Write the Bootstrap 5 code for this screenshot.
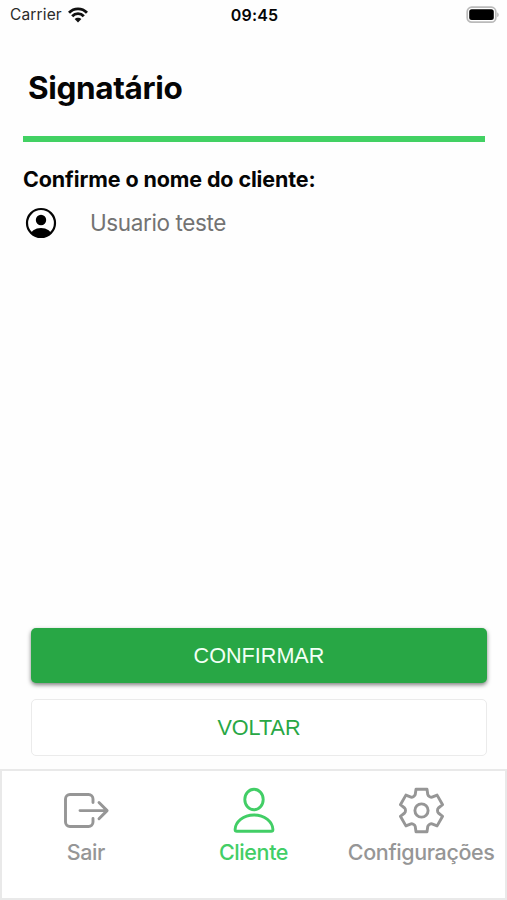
<!DOCTYPE html>
<html lang="pt-BR">
<head>
<meta charset="utf-8">
<meta name="viewport" content="width=device-width, initial-scale=1">
<title>Signatário</title>
<link href="https://cdn.jsdelivr.net/npm/bootstrap@5.3.0/dist/css/bootstrap.min.css" rel="stylesheet">
<style>
body{font-family:Inter,"Liberation Sans",sans-serif;color:#050505;background:#fefefe}
svg{display:block;flex:none}
.screen{height:900px;overflow:hidden}
.statusbar{height:30px;padding:0 8px 0 10px;line-height:30px}
.carrier{font-size:15.5px;color:#2b2b2b;letter-spacing:.15px}
.wifi{margin-left:6px}
.clock{font-size:16px;font-weight:600;letter-spacing:.2px}
.page-title{font-size:31.5px;font-weight:700;line-height:40px;margin:38px 0 0 28px;letter-spacing:-.35px}
.rule{height:6px;background:#42d163;margin:28px 22px 0 23px}
.question{font-size:21.5px;font-weight:700;line-height:28px;margin:23px 0 0 23px;letter-spacing:-.12px}
.client{margin:14px 0 0 25px;gap:33px;height:32px}
.client-name{font-size:22.5px;color:#737373;line-height:32px;letter-spacing:-.38px}
.actions{padding:0 20px 13px 31px;gap:16px}
.actions .btn{font:21.6px/1 "Liberation Sans",Arial,sans-serif;border-radius:5px;padding:0}
.actions .btn-confirm{height:55px;background:#28a745;color:#f2fff5;border:0;box-shadow:0 2px 4px rgba(0,0,0,.5)}
.actions .btn-back{height:57px;background:#fff;color:#28a745;border:1.5px solid #ebebeb}
.tabs{height:131px;border:2px solid #e9e9e9;background:#fff;padding-top:15px}
.tab{width:168px;color:#969696;font-size:21.5px;line-height:28px;text-decoration:none;font-weight:500;letter-spacing:-.38px}
.tab svg{margin-bottom:2px}
.tab.active{color:#42ce66}
</style>
<script src="https://cdn.jsdelivr.net/npm/bootstrap@5.3.0/dist/js/bootstrap.bundle.min.js"></script>
</head>
<body>
<div class="screen d-flex flex-column">
  <header class="statusbar row g-0 align-items-center">
    <div class="col d-flex align-items-center">
      <span class="carrier">Carrier</span>
      <svg class="wifi" width="20" height="16" viewBox="0 0 20 16" fill="none" stroke="#111" stroke-width="2.9"><path d="M1 5.8C6 .6 14 .6 19 5.8M4.2 9.2c3.2-3.4 8.4-3.4 11.6 0"/><path d="M6.600 12.100c1.900-1.800 4.900-1.800 6.800 0l-3.400 3.300z" fill="#111" stroke="none"/></svg>
    </div>
    <div class="col-auto clock">09:45</div>
    <div class="col d-flex justify-content-end">
      <svg width="33" height="18" viewBox="0 0 33 18"><rect x="1.2" y="1.2" width="28.6" height="15" rx="4.5" fill="#fff" stroke="#bababa" stroke-width="1.7"/><rect x="3.2" y="3.3" width="24.6" height="10.8" rx="2.5" fill="#000"/><path d="M31.2 6.5c2 .6 2 4 0 4.6z" fill="#bababa"/></svg>
    </div>
  </header>
  <main class="flex-grow-1 d-flex flex-column">
    <h1 class="page-title">Signatário</h1>
    <div class="rule"></div>
    <h2 class="question">Confirme o nome do cliente:</h2>
    <div class="client d-flex align-items-center">
      <svg width="32" height="32" viewBox="0 0 32 32"><defs><clipPath id="disc"><circle cx="16" cy="16" r="14.5"/></clipPath></defs><circle cx="16" cy="16" r="14" fill="#fff" stroke="#050505" stroke-width="2.2"/><circle cx="16" cy="13" r="5.2"/><ellipse cx="16" cy="28.5" rx="10.8" ry="7.5" clip-path="url(#disc)"/></svg>
      <span class="client-name">Usuario teste</span>
    </div>
    <div class="actions d-flex flex-column mt-auto">
      <button class="btn btn-success btn-confirm w-100" type="button">CONFIRMAR</button>
      <button class="btn btn-back w-100" type="button">VOLTAR</button>
    </div>
  </main>
  <nav class="tabs d-flex justify-content-between align-items-start">
    <a class="tab d-flex flex-column align-items-center" href="#">
      <svg width="48" height="50" viewBox="62.500 786 48 50" fill="none" stroke="currentColor" stroke-width="2.900" stroke-linecap="round" stroke-linejoin="round"><path d="M93.500 802.500v-3.500a4.500 4.500 0 0 0-4.500-4.500H70.500a4.500 4.500 0 0 0-4.500 4.500v23a4.500 4.500 0 0 0 4.500 4.500H89a4.500 4.500 0 0 0 4.500-4.500v-3.500M80.500 810.600h27M99.500 802.500l8.100 8.100-8.100 8.100"/></svg>
      <span>Sair</span>
    </a>
    <a class="tab active d-flex flex-column align-items-center" href="#">
      <svg width="48" height="50" viewBox="230 786 48 50" fill="none" stroke="currentColor" stroke-width="2.900" stroke-linejoin="round"><ellipse cx="254" cy="799.500" rx="9.200" ry="10.200"/><path d="M254 815c-11 0-18.500 7-18.900 14.400 0 1 .7 1.800 1.800 1.800h34.200c1.100 0 1.800-.8 1.800-1.800C272.500 822 265 815 254 815z"/></svg>
      <span>Cliente</span>
    </a>
    <a class="tab d-flex flex-column align-items-center" href="#">
      <svg width="48" height="50" viewBox="-24.500 -24.500 48 50" fill="none" stroke="currentColor" stroke-width="2.900" stroke-linejoin="round"><circle r="6.600"/><path d="M-5.500-21.200H5.500L6.300-15.800Q6.600-14.600 8.200-13.800T10.500-13.400L15.600-15.400 21.100-5.800 16.900-2.500Q16 -1.600 16 0T16.900 2.500L21.100 5.800 15.600 15.400 10.500 13.400Q9.500 13.100 8.200 13.800T6.300 15.800L5.500 21.200H-5.500L-6.300 15.800Q-6.600 14.600-8.200 13.800T-10.500 13.400L-15.600 15.400-21.100 5.800-16.900 2.500Q-16 1.600-16 0T-16.900-2.500L-21.100-5.800-15.600-15.400-10.500-13.400Q-9.500-13.100-8.200-13.800T-6.300-15.800Z"/></svg>
      <span>Configurações</span>
    </a>
  </nav>
</div>
</body>
</html>
